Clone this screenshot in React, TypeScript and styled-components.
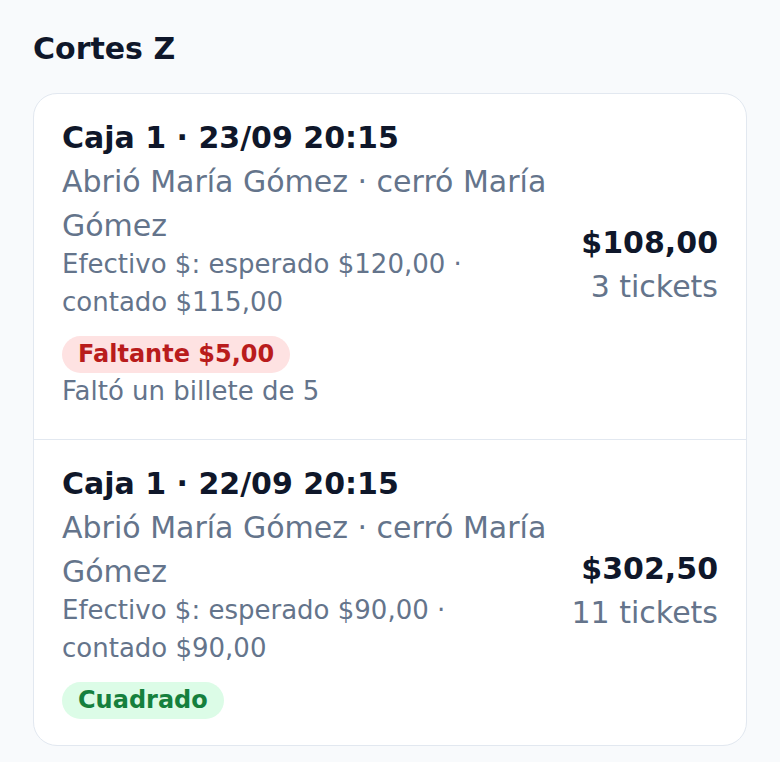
import React from "react";
import styled, { createGlobalStyle } from "styled-components";

const GlobalStyle = createGlobalStyle`
  html, body {
    margin: 0;
    padding: 0;
    background: #f8fafc;
  }
  body {
    font-family: "DejaVu Sans", "Noto Sans", sans-serif;
    color: #0f172a;
  }
  * { box-sizing: border-box; }
`;

const Page = styled.main`
  padding: 27px 33px 16px;
`;

const Title = styled.h1`
  margin: 0 0 22px;
  font-size: 30px;
  line-height: 44px;
  font-weight: 700;
  color: #0f172a;
`;

const Card = styled.section`
  background: #ffffff;
  border: 1px solid #e2e8f0;
  border-radius: 24px;
  overflow: hidden;
`;

const Row = styled.div<{ $last?: boolean }>`
  display: flex;
  align-items: center;
  gap: 24px;
  padding: 22px 28px 26px;
  border-bottom: ${(p) => (p.$last ? "none" : "1px solid #e2e8f0")};
`;

const Info = styled.div`
  flex: 1;
  min-width: 0;
  display: flex;
  flex-direction: column;
  align-items: flex-start;
`;

const Heading = styled.div`
  font-size: 30px;
  line-height: 44px;
  font-weight: 700;
  color: #0f172a;
`;

const People = styled.div`
  font-size: 30px;
  line-height: 44px;
  color: #64748b;
`;

const Meta = styled.div`
  margin-top: -3px;
  font-size: 26px;
  line-height: 38px;
  color: #64748b;
`;

const Badge = styled.span<{ $tone: "danger" | "success" }>`
  display: inline-block;
  margin-top: 15px;
  padding: 2px 16px;
  border-radius: 999px;
  font-size: 24px;
  line-height: 33px;
  font-weight: 700;
  background: ${(p) => (p.$tone === "danger" ? "#fee2e2" : "#dcfce7")};
  color: ${(p) => (p.$tone === "danger" ? "#b91c1c" : "#15803d")};
`;

const Note = styled.div`
  margin-bottom: 4px;
  font-size: 26px;
  line-height: 36px;
  color: #64748b;
`;

const Totals = styled.div`
  flex: none;
  display: flex;
  flex-direction: column;
  align-items: flex-end;
`;

const Amount = styled.div`
  font-size: 30px;
  line-height: 44px;
  font-weight: 700;
  color: #0f172a;
`;

const Tickets = styled.div`
  font-size: 30px;
  line-height: 44px;
  color: #64748b;
`;

type Corte = {
  title: string;
  people: string;
  meta: string;
  badge: { tone: "danger" | "success"; label: string };
  note?: string;
  amount: string;
  tickets: string;
};

const cortes: Corte[] = [
  {
    title: "Caja 1 · 23/09 20:15",
    people: "Abrió María Gómez · cerró María Gómez",
    meta: "Efectivo $: esperado $120,00 · contado $115,00",
    badge: { tone: "danger", label: "Faltante $5,00" },
    note: "Faltó un billete de 5",
    amount: "$108,00",
    tickets: "3 tickets",
  },
  {
    title: "Caja 1 · 22/09 20:15",
    people: "Abrió María Gómez · cerró María Gómez",
    meta: "Efectivo $: esperado $90,00 · contado $90,00",
    badge: { tone: "success", label: "Cuadrado" },
    amount: "$302,50",
    tickets: "11 tickets",
  },
];

export default function App() {
  return (
    <>
      <GlobalStyle />
      <Page>
        <Title>Cortes Z</Title>
        <Card>
          {cortes.map((c, i) => (
            <Row key={c.title} $last={i === cortes.length - 1}>
              <Info>
                <Heading>{c.title}</Heading>
                <People>{c.people}</People>
                <Meta>{c.meta}</Meta>
                <Badge $tone={c.badge.tone}>{c.badge.label}</Badge>
                {c.note && <Note>{c.note}</Note>}
              </Info>
              <Totals>
                <Amount>{c.amount}</Amount>
                <Tickets>{c.tickets}</Tickets>
              </Totals>
            </Row>
          ))}
        </Card>
      </Page>
    </>
  );
}
